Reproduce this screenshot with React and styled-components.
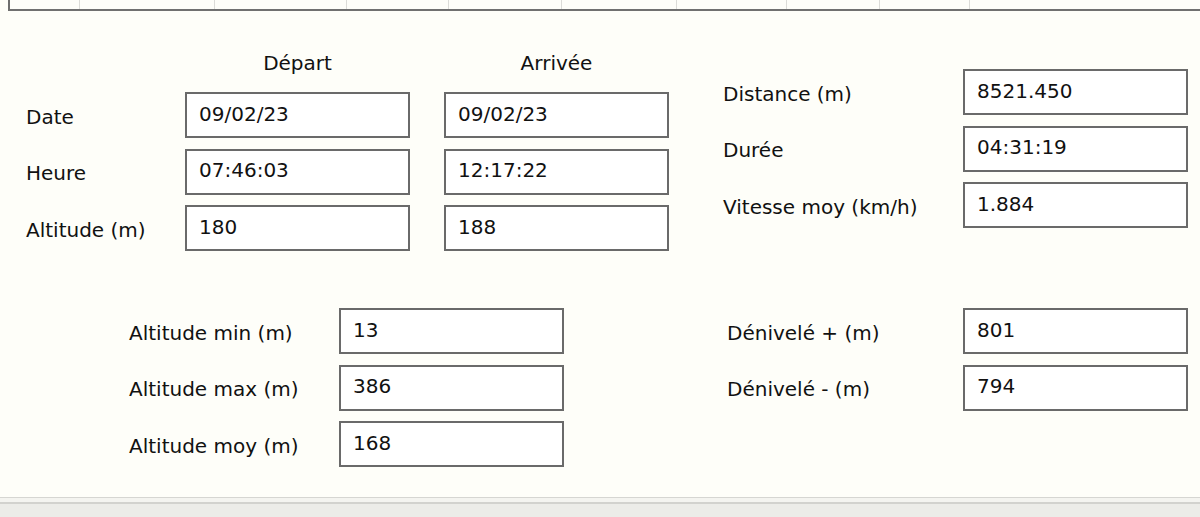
import React from "react";
import styled, { createGlobalStyle } from "styled-components";

const GlobalStyle = createGlobalStyle`
  html, body {
    margin: 0;
    padding: 0;
    background: #fefef9;
  }
  body {
    font-family: "DejaVu Sans", "Liberation Sans", sans-serif;
    color: #111;
  }
`;

const columns = [70, 135, 132, 102, 113, 115, 110, 93, 90];

const start = [
  { label: "Date", dep: "09/02/23", arr: "09/02/23" },
  { label: "Heure", dep: "07:46:03", arr: "12:17:22" },
  { label: "Altitude (m)", dep: "180", arr: "188" },
];

const totals = [
  { label: "Distance (m)", value: "8521.450" },
  { label: "Durée", value: "04:31:19" },
  { label: "Vitesse moy (km/h)", value: "1.884" },
];

const altitudes = [
  { label: "Altitude min (m)", value: "13" },
  { label: "Altitude max (m)", value: "386" },
  { label: "Altitude moy (m)", value: "168" },
];

const elevation = [
  { label: "Dénivelé + (m)", value: "801" },
  { label: "Dénivelé - (m)", value: "794" },
];

const App = () => {
  return (
    <>
      <GlobalStyle />
      <Page>
        <TableStrip>
          {columns.map((w, i) => (
            <Cell key={i} $w={w} />
          ))}
          <Cell $grow />
        </TableStrip>

        <Content>
          <Row>
            <StartGrid>
              <span />
              <Heading>Départ</Heading>
              <Heading>Arrivée</Heading>
              {start.map((r) => (
                <React.Fragment key={r.label}>
                  <Label>{r.label}</Label>
                  <Field>{r.dep}</Field>
                  <Field>{r.arr}</Field>
                </React.Fragment>
              ))}
            </StartGrid>
            <FieldGrid $label={240} $top={17} $left={54}>
              {totals.map((r) => (
                <React.Fragment key={r.label}>
                  <Label>{r.label}</Label>
                  <Field>{r.value}</Field>
                </React.Fragment>
              ))}
            </FieldGrid>
          </Row>

          <Row $gap={57}>
            <FieldGrid $label={210} $left={103}>
              {altitudes.map((r) => (
                <React.Fragment key={r.label}>
                  <Label>{r.label}</Label>
                  <Field>{r.value}</Field>
                </React.Fragment>
              ))}
            </FieldGrid>
            <FieldGrid $label={236} $left={163}>
              {elevation.map((r) => (
                <React.Fragment key={r.label}>
                  <Label>{r.label}</Label>
                  <Field>{r.value}</Field>
                </React.Fragment>
              ))}
            </FieldGrid>
          </Row>
        </Content>

        <Footer />
      </Page>
    </>
  );
};

const Page = styled.div`
  display: flex;
  flex-direction: column;
  height: 517px;
  overflow: hidden;
`;

const TableStrip = styled.div`
  display: flex;
  height: 9px;
  margin-left: 8px;
  border-left: 2px solid #6e6e6e;
  border-bottom: 2px solid #707070;
  flex-shrink: 0;
`;

const Cell = styled.div`
  width: ${(p) => (p.$w ? `${p.$w}px` : "auto")};
  flex: ${(p) => (p.$grow ? 1 : "none")};
  border-right: ${(p) => (p.$grow ? "none" : "1px solid #dcdcd8")};
  box-sizing: border-box;
`;

const Content = styled.div`
  flex: 1;
  padding-top: 41px;
  padding-left: 26px;
`;

const Row = styled.div`
  display: flex;
  align-items: flex-start;
  margin-top: ${(p) => p.$gap || 0}px;
`;

const StartGrid = styled.div`
  display: grid;
  grid-template-columns: 125px 225px 225px;
  column-gap: 34px;
  row-gap: 10.5px;
  align-items: center;
`;

const FieldGrid = styled.div`
  display: grid;
  grid-template-columns: ${(p) => p.$label}px 225px;
  row-gap: 10.5px;
  align-items: center;
  margin-top: ${(p) => p.$top || 0}px;
  margin-left: ${(p) => p.$left || 0}px;
`;

const Heading = styled.div`
  font-size: 20px;
  line-height: 22px;
  text-align: center;
  margin-bottom: 7.5px;
`;

const Label = styled.div`
  font-size: 20px;
  line-height: 24px;
  white-space: nowrap;
  padding-top: 3px;
`;

const Field = styled.div`
  box-sizing: border-box;
  height: 46px;
  border: 2px solid #6a6a6a;
  background: #ffffff;
  padding: 0 12px 3px;
  font-size: 20px;
  display: flex;
  align-items: center;
  white-space: nowrap;
`;

const Footer = styled.div`
  height: 19px;
  flex-shrink: 0;
  background: #ecece8;
  border-top: 1px solid #d6d6d2;
  box-shadow: inset 0 4px 0 #f4f4f0, inset 0 6px 0 #d2d2ce;
`;

export default App;
